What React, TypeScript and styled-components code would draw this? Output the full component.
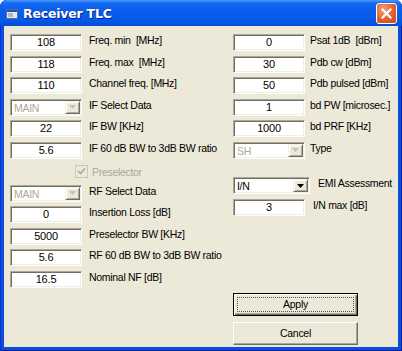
import React from "react"
import styled, { createGlobalStyle } from "styled-components"

const GlobalStyle = createGlobalStyle`
  html, body {
    margin: 0;
    padding: 0;
    background: #ffffff;
  }
  body {
    font-family: "Liberation Sans", Arial, sans-serif;
    font-size: 10.5px;
    letter-spacing: -0.3px;
    color: #000000;
  }
`

const colors = {
  face: "#ECE9D8",
  shadow: "#ACA899",
  darkShadow: "#716F64",
  light: "#F1EFE2",
  disabled: "#ACA899",
}

type FieldDef = { value: string; label: string }

const leftTop: FieldDef[] = [
  { value: "108", label: "Freq. min  [MHz]" },
  { value: "118", label: "Freq. max  [MHz]" },
  { value: "110", label: "Channel freq. [MHz]" },
]

const leftMid: FieldDef[] = [
  { value: "22", label: "IF BW [KHz]" },
  { value: "5.6", label: "IF 60 dB BW to 3dB BW ratio" },
]

const leftBottom: FieldDef[] = [
  { value: "0", label: "Insertion Loss [dB]" },
  { value: "5000", label: "Preselector BW [KHz]" },
  { value: "5.6", label: "RF 60 dB BW to 3dB BW ratio" },
  { value: "16.5", label: "Nominal NF [dB]" },
]

const rightFields: FieldDef[] = [
  { value: "0", label: "Psat 1dB  [dBm]" },
  { value: "30", label: "Pdb cw [dBm]" },
  { value: "50", label: "Pdb pulsed [dBm]" },
  { value: "1", label: "bd PW [microsec.]" },
  { value: "1000", label: "bd PRF [KHz]" },
]

const Arrow = ({ disabled }: { disabled?: boolean }) => (
  <svg width="7" height="4" viewBox="0 0 7 4">
    <path d="M0 0h7L3.5 4z" fill={disabled ? "#C5C2B2" : "#000"} />
  </svg>
)

const Combo: React.FC<{ value: string; disabled?: boolean; wide?: boolean }> = ({
  value,
  disabled,
  wide,
}) => (
  <ComboBox $disabled={disabled} $wide={wide}>
    <ComboText>{value}</ComboText>
    <ComboButton>
      <Arrow disabled={disabled} />
    </ComboButton>
  </ComboBox>
)

const Field: React.FC<FieldDef & { gap?: number }> = ({ value, label, gap }) => (
  <Row>
    <TextBox>{value}</TextBox>
    <Label $gap={gap}>{label}</Label>
  </Row>
)

export default function App() {
  return (
    <>
      <GlobalStyle />
      <Window>
        <TitleBar>
          <TitleIcon>
            <svg width="12" height="10" viewBox="0 0 12 10">
              <rect x="0.5" y="0.5" width="11" height="9" fill="#E8E8F0" stroke="#5070A0" />
              <rect x="1" y="1" width="10" height="2" fill="#2050B0" />
              <rect x="2" y="4" width="5" height="4" fill="#B0B8C8" />
            </svg>
          </TitleIcon>
          <Title>Receiver TLC</Title>
          <CloseButton>
            <svg width="11" height="11" viewBox="0 0 11 11">
              <path d="M1.5 1.5l8 8M9.5 1.5l-8 8" stroke="#fff" strokeWidth="2.2" strokeLinecap="square" />
            </svg>
          </CloseButton>
        </TitleBar>
        <Body>
          <Column>
            {leftTop.map((f) => (
              <Field key={f.label} {...f} gap={7} />
            ))}
            <Row>
              <Combo value="MAIN" disabled />
              <Label $gap={7}>IF Select Data</Label>
            </Row>
            {leftMid.map((f) => (
              <Field key={f.label} {...f} gap={7} />
            ))}
            <CheckRow>
              <CheckBox>
                <svg width="9" height="9" viewBox="0 0 9 9">
                  <path d="M1 4l2.5 2.5L8 1.5" stroke="#ACA899" strokeWidth="1.6" fill="none" />
                </svg>
              </CheckBox>
              <CheckLabel>Preselector</CheckLabel>
            </CheckRow>
            <Row>
              <Combo value="MAIN" disabled />
              <Label $gap={7}>RF Select Data</Label>
            </Row>
            {leftBottom.map((f) => (
              <Field key={f.label} {...f} gap={7} />
            ))}
          </Column>
          <Column>
            {rightFields.map((f) => (
              <Field key={f.label} {...f} gap={5} />
            ))}
            <Row>
              <Combo value="SH" disabled />
              <Label $gap={5}>Type</Label>
            </Row>
            <AssessRow>
              <Combo value="I/N" wide />
              <Label $gap={8}>EMI Assessment</Label>
            </AssessRow>
            <Field value="3" label="I/N max [dB]" gap={8} />
            <Buttons>
              <DefaultButton>
                <FocusRect>Apply</FocusRect>
              </DefaultButton>
              <Button>Cancel</Button>
            </Buttons>
          </Column>
        </Body>
      </Window>
    </>
  )
}

const Window = styled.div`
  width: 402px;
  height: 351px;
  box-sizing: border-box;
  display: flex;
  flex-direction: column;
  background: #0A4FDC;
  padding: 0 4px 4px 4px;
  box-shadow: inset 1px 0 0 #0831D9, inset -1px 0 0 #001EA0, inset 0 -1px 0 #001EA0;
  border-radius: 7px 7px 0 0;
  overflow: hidden;
`

const TitleBar = styled.div`
  height: 26px;
  margin: 0 -4px;
  display: flex;
  align-items: center;
  padding: 0 5px 0 6px;
  background: linear-gradient(
    to bottom,
    #4A9CFF 0%,
    #1468F0 12%,
    #0A5EEC 40%,
    #065AE8 75%,
    #004CD8 100%
  );
  border-radius: 7px 7px 0 0;
`

const TitleIcon = styled.div`
  width: 12px;
  height: 10px;
  display: flex;
  margin-top: 1px;
`

const Title = styled.div`
  margin-left: 5px;
  flex: 1;
  color: #ffffff;
  font-family: "DejaVu Sans", "Liberation Sans", sans-serif;
  font-weight: bold;
  font-size: 12.5px;
  letter-spacing: -0.2px;
  text-shadow: 1px 1px 0 #0A1E8C;
`

const CloseButton = styled.div`
  width: 21px;
  height: 21px;
  box-sizing: border-box;
  border: 1px solid #ffffff;
  border-radius: 3px;
  background: radial-gradient(circle at 35% 30%, #F2A07C 0%, #E4602E 55%, #C8461C 100%);
  display: flex;
  align-items: center;
  justify-content: center;
`

const Body = styled.div`
  flex: 1;
  background: ${colors.face};
  display: grid;
  grid-template-columns: 223px 1fr;
  padding: 8px 0 0 6px;
`

const Column = styled.div`
  display: flex;
  flex-direction: column;
`

const Row = styled.div`
  height: 21.5px;
  display: flex;
  align-items: flex-start;
  white-space: pre;
`

const sunken = `
  box-sizing: border-box;
  border-style: solid;
  border-width: 1px;
  border-color: ${colors.shadow} #ffffff #ffffff ${colors.shadow};
  box-shadow: inset 1px 1px 0 ${colors.darkShadow}, inset -1px -1px 0 ${colors.light};
`

const TextBox = styled.div`
  ${sunken}
  width: 72px;
  height: 17px;
  background: #ffffff;
  text-align: center;
  line-height: 15px;
  font-size: 11px;
  letter-spacing: -0.2px;
`

const Label = styled.span<{ $gap?: number }>`
  margin-left: ${({ $gap }) => $gap ?? 7}px;
  line-height: 14px;
  margin-top: -1px;
`

const ComboBox = styled.div<{ $disabled?: boolean; $wide?: boolean }>`
  ${sunken}
  width: ${({ $wide }) => ($wide ? 77 : 72)}px;
  height: 17px;
  background: #ffffff;
  color: ${({ $disabled }) => ($disabled ? colors.disabled : "#000000")};
  display: flex;
  align-items: stretch;
  padding: 2px;
`

const ComboText = styled.span`
  flex: 1;
  line-height: 12px;
  padding-left: 1px;
`

const ComboButton = styled.span`
  width: 15px;
  box-sizing: border-box;
  background: ${colors.face};
  border-style: solid;
  border-width: 1px;
  border-color: ${colors.light} ${colors.darkShadow} ${colors.darkShadow} ${colors.light};
  box-shadow: inset 1px 1px 0 #ffffff, inset -1px -1px 0 ${colors.shadow};
  display: flex;
  align-items: center;
  justify-content: center;
  margin: -1px -1px -1px 0;
`

const CheckRow = styled.div`
  height: 21.5px;
  display: flex;
  align-items: center;
  padding-left: 65px;
  margin-top: -2px;
  margin-bottom: 2px;
`

const CheckBox = styled.div`
  width: 13px;
  height: 13px;
  box-sizing: border-box;
  border: 1px solid #CAC8BB;
  background: ${colors.face};
  display: flex;
  align-items: center;
  justify-content: center;
`

const CheckLabel = styled.span`
  margin-left: 4px;
  color: ${colors.disabled};
`

const AssessRow = styled(Row)`
  margin-top: 14px;
  height: 22px;
`

const Buttons = styled.div`
  margin-top: 72px;
  display: flex;
  flex-direction: column;
  gap: 6px;
  width: 125px;
`

const Button = styled.div`
  height: 23px;
  box-sizing: border-box;
  background: ${colors.face};
  border-style: solid;
  border-width: 1px;
  border-color: #ffffff ${colors.darkShadow} ${colors.darkShadow} #ffffff;
  box-shadow: inset -1px -1px 0 ${colors.shadow};
  display: flex;
  align-items: center;
  justify-content: center;
`

const DefaultButton = styled(Button)`
  border: 1px solid #000000;
  box-shadow: inset 1px 1px 0 #ffffff, inset -1px -1px 0 ${colors.darkShadow},
    inset -2px -2px 0 ${colors.shadow};
  padding: 3px;
  align-items: stretch;
  justify-content: stretch;
`

const FocusRect = styled.div`
  flex: 1;
  border: 1px dotted #555555;
  display: flex;
  align-items: center;
  justify-content: center;
`
